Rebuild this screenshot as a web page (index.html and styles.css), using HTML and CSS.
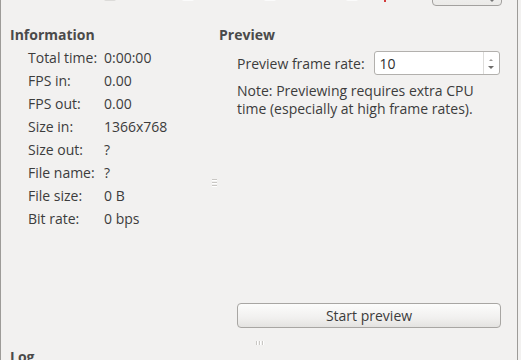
FILE: index.html
```html
<!DOCTYPE html>
<html lang="en">
	<head>
		<meta charset="UTF-8" />
		<meta name="viewport" content="width=device-width, initial-scale=1.0" />
		<title>Recording settings</title>

		<link rel="stylesheet" href="styles.css">
	</head>
	<body>
		<div class="window">
			<div class="cutoff">
				<span class="cut-text">y</span>
				<span class="cut-check"></span>
				<span class="cut-mark"></span>
				<span class="cut-mark"></span>
				<span class="cut-mark"></span>
				<span class="cut-red"></span>
				<span class="cut-combo"><span class="cut-arrow"></span></span>
			</div>

			<div class="panes">
				<section class="info">
					<h2>Information</h2>
					<div class="info-grid">
						<span>Total time:</span><span>0:00:00</span>
						<span>FPS in:</span><span>0.00</span>
						<span>FPS out:</span><span>0.00</span>
						<span>Size in:</span><span>1366x768</span>
						<span>Size out:</span><span>?</span>
						<span>File name:</span><span>?</span>
						<span>File size:</span><span>0 B</span>
						<span>Bit rate:</span><span>0 bps</span>
					</div>
				</section>

				<div class="vhandle">
					<i></i><i></i><i></i>
				</div>

				<section class="preview">
					<h2>Preview</h2>
					<div class="rate-row">
						<label for="rate">Preview frame rate:</label>
						<div class="spin">
							<input type="text" id="rate" value="10" />
							<div class="spin-buttons">
								<span class="up"></span>
								<span class="down"></span>
							</div>
						</div>
					</div>
					<p class="note">
						Note: Previewing requires extra CPU<br />
						time (especially at high frame rates).
					</p>
					<button type="button" class="start">Start preview</button>
				</section>
			</div>

			<div class="hhandle">
				<i></i><i></i><i></i>
			</div>

			<h2 class="log-title">Log</h2>
		</div>
	</body>
</html>
```

FILE: styles.css
```css
html,
body {
	margin: 0;
	height: 100%;
	overflow: hidden;
	background-color: #f2f1f0;
}

body {
	font-family: "Open Sans", "DejaVu Sans", sans-serif;
	font-size: 14px;
	color: #3c3c3c;
}

.window {
	width: 516px;
	height: 360px;
	border-left: 1px solid #9d9b98;
	border-right: 1px solid #9d9b98;
	display: flex;
	flex-direction: column;
}

.window > * {
	flex-shrink: 0;
}

h2 {
	margin: 0;
	font-size: 14px;
	font-weight: bold;
	line-height: 17px;
	color: #4a4a4a;
}

/* bottom edge of the row above, scrolled out of view */
.cutoff {
	height: 6px;
	overflow: hidden;
	display: flex;
	align-items: flex-end;
}

.cut-text {
	margin-left: 64px;
	line-height: 14px;
	height: 20px;
	margin-bottom: 2px;
}

.cut-check {
	width: 12px;
	height: 14px;
	margin-left: 32px;
	margin-bottom: 5px;
	background-color: #dcdbd9;
	border-radius: 2px;
}

.cut-mark {
	width: 12px;
	height: 10px;
	margin-left: 66px;
	margin-bottom: 5px;
	background-color: #fbfbfb;
	border-radius: 2px;
}

.cut-mark + .cut-mark {
	margin-left: 70px;
}

.cut-red {
	width: 2px;
	height: 10px;
	margin-left: 26px;
	margin-bottom: 4px;
	background-color: #d33b3b;
}

.cut-combo {
	width: 68px;
	height: 20px;
	margin-left: 46px;
	border: 1px solid #a3a19f;
	border-radius: 4px;
	background: linear-gradient(#f7f7f6, #ebeae8);
	display: flex;
	align-items: flex-end;
	justify-content: flex-end;
}

.cut-arrow {
	width: 0;
	height: 0;
	margin: 0 6px 3px 0;
	border-left: 3px solid transparent;
	border-right: 3px solid transparent;
	border-top: 3px solid #777;
}

.panes {
	display: flex;
	height: 322px;
}

.info {
	width: 199px;
	padding: 20px 0 0 9px;
}

.info-grid {
	margin-top: 3px;
	margin-left: 18px;
	display: grid;
	grid-template-columns: 76px 1fr;
	line-height: 23px;
}

.vhandle {
	width: 10px;
	padding-top: 173px;
	display: flex;
	flex-direction: column;
	align-items: center;
	gap: 2px;
}

.vhandle i,
.hhandle i {
	display: block;
	background-color: #c9c7c4;
}

.vhandle i {
	width: 5px;
	height: 1px;
	box-shadow: 0 1px 0 #ffffff;
}

.preview {
	flex: 1;
	padding: 20px 16px 0 0;
	display: flex;
	flex-direction: column;
}

.rate-row {
	margin-top: 8px;
	margin-left: 18px;
	display: flex;
	align-items: center;
	gap: 9px;
	height: 24px;
}

.rate-row label {
	line-height: 17px;
}

.spin {
	width: 124px;
	height: 22px;
	border: 1px solid #b2b0ad;
	border-radius: 3px;
	background-color: #ffffff;
	display: flex;
}

.spin input {
	flex: 1;
	min-width: 0;
	border: none;
	padding: 0 0 0 5px;
	font: inherit;
	color: #2e2e2e;
	background: transparent;
	outline: none;
}

.spin-buttons {
	width: 15px;
	border-left: 1px solid #dddcda;
	display: flex;
	flex-direction: column;
	justify-content: space-between;
	align-items: center;
	padding: 7px 0 5px;
}

.spin-buttons span {
	width: 0;
	height: 0;
	border-left: 2px solid transparent;
	border-right: 2px solid transparent;
}

.spin-buttons .up {
	border-bottom: 2px solid #9a9896;
}

.spin-buttons .down {
	border-left-width: 3px;
	border-right-width: 3px;
	border-top: 3px solid #6e6c6a;
}

.note {
	margin: 7px 0 0 18px;
	line-height: 18px;
}

.start {
	margin: auto 0 0 18px;
	height: 25px;
	border: 1px solid #a8a6a3;
	border-radius: 4px;
	background: linear-gradient(#fcfcfb, #f1f0ef 60%, #e4e3e1);
	font: inherit;
	color: #3c3c3c;
	padding: 0;
	cursor: pointer;
}

.hhandle {
	height: 20px;
	display: flex;
	justify-content: center;
	align-items: flex-start;
	gap: 2px;
	padding-top: 13px;
	box-sizing: border-box;
}

.hhandle i {
	width: 1px;
	height: 4px;
	box-shadow: 1px 0 0 #ffffff;
}

.log-title {
	padding-left: 9px;
}
```
